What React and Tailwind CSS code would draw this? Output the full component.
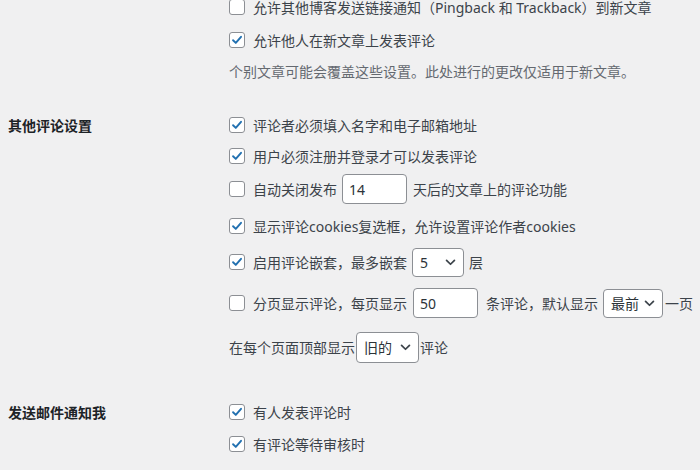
import React from "react";

const font = { fontFamily: '"Noto Sans", "Noto Sans CJK SC", sans-serif' };

function Checkbox({ checked }) {
  return (
    <span className="w-4 h-4 shrink-0 rounded-[3px] border border-[#8c8f94] bg-white flex items-center justify-center">
      {checked && (
        <svg viewBox="0 0 16 16" className="w-[14px] h-[14px]">
          <path d="M3.5 8.3 L6.6 11.3 L12.6 4.4" fill="none" stroke="#2271b1" strokeWidth="2.2" strokeLinecap="round" strokeLinejoin="round" />
        </svg>
      )}
    </span>
  );
}

function TextBox({ value, w = "w-[64px]" }) {
  return (
    <span className={`${w} h-[30px] rounded-[4px] border border-[#8c8f94] bg-white flex items-center px-[6px] text-[#2c3338]`}>
      {value}
    </span>
  );
}

function Select({ value, w = "w-[56px]", h = "h-[29px]" }) {
  return (
    <span className={`${w} ${h} rounded-[4px] border border-[#8c8f94] bg-white flex items-center justify-between pl-[7px] pr-[7px] text-[#2c3338]`}>
      <span>{value}</span>
      <svg viewBox="0 0 12 8" className="w-[11px] h-[7px]">
        <path d="M1.5 1.5 L6 6 L10.5 1.5" fill="none" stroke="#3c434a" strokeWidth="2" strokeLinecap="round" strokeLinejoin="round" />
      </svg>
    </span>
  );
}

function Row({ h, checked, children, box = true }) {
  return (
    <div className={`${h} flex items-center`}>
      {box && <Checkbox checked={checked} />}
      <div className={`flex items-center ${box ? "ml-2" : ""}`}>{children}</div>
    </div>
  );
}

export default function App() {
  return (
    <div className="w-[700px] h-[470px] overflow-hidden bg-[#f0f0f1] text-[14px] text-[#3c434a]" style={font}>
      <div className="-mt-[10px]">
        {/* discussion defaults */}
        <div className="flex">
          <div className="w-[229px] shrink-0" />
          <div className="flex flex-col">
            <Row h="h-[34px]" checked={false}>允许其他博客发送链接通知（Pingback 和 Trackback）到新文章</Row>
            <Row h="h-[32px]" checked>允许他人在新文章上发表评论</Row>
            <div className="h-[30px] flex items-center text-[#646970]">个别文章可能会覆盖这些设置。此处进行的更改仅适用于新文章。</div>
          </div>
        </div>

        {/* other comment settings */}
        <div className="flex mt-[24px]">
          <div className="w-[229px] shrink-0 pl-2 h-[30px] flex items-center font-bold text-[#1d2327]">其他评论设置</div>
          <div className="flex flex-col">
            <Row h="h-[30px]" checked>评论者必须填入名字和电子邮箱地址</Row>
            <Row h="h-[32px]" checked>用户必须注册并登录才可以发表评论</Row>
            <Row h="h-[34px]" checked={false}>
              <span>自动关闭发布</span>
              <span className="ml-[5px]"><TextBox value="14" w="w-[65px]" /></span>
              <span className="ml-[6px]">天后的文章上的评论功能</span>
            </Row>
            <Row h="h-[40px]" checked>显示评论cookies复选框，允许设置评论作者cookies</Row>
            <Row h="h-[32px]" checked>
              <span>启用评论嵌套，最多嵌套</span>
              <span className="ml-[5px]"><Select value="5" w="w-[52px]" /></span>
              <span className="ml-[5px]">层</span>
            </Row>
            <Row h="h-[50px]" checked={false}>
              <span>分页显示评论，每页显示</span>
              <span className="ml-[6px]"><TextBox value="50" w="w-[65px]" /></span>
              <span className="ml-[8px]">条评论，默认显示</span>
              <span className="ml-[5px]"><Select value="最前" w="w-[60px]" /></span>
              <span className="ml-[2px] whitespace-nowrap">一页</span>
            </Row>
            <Row h="h-[38px]" box={false}>
              <span>在每个页面顶部显示</span>
              <span className="ml-[1px]"><Select value="旧的" w="w-[63px]" h="h-[31px]" /></span>
              <span className="ml-[1px]">评论</span>
            </Row>
          </div>
        </div>

        {/* email notifications */}
        <div className="flex mt-[30px]">
          <div className="w-[229px] shrink-0 pl-2 h-[32px] flex items-center font-bold text-[#1d2327]">发送邮件通知我</div>
          <div className="flex flex-col">
            <Row h="h-[32px]" checked>有人发表评论时</Row>
            <Row h="h-[32px]" checked>有评论等待审核时</Row>
          </div>
        </div>
      </div>
    </div>
  );
}
